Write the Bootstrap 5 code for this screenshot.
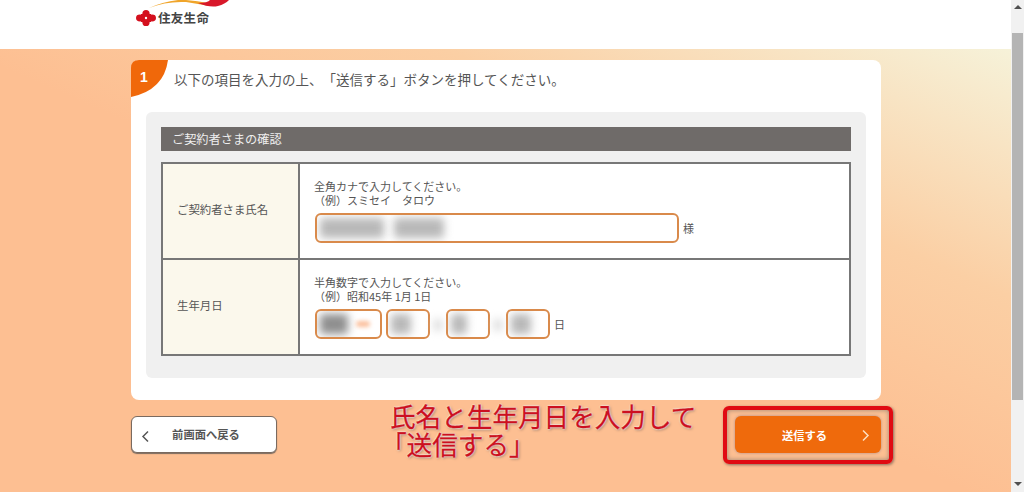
<!DOCTYPE html>
<html lang="ja">
<head>
<meta charset="utf-8">
<title>ご契約者さまの確認</title>
<link rel="stylesheet" href="https://cdn.jsdelivr.net/npm/bootstrap@5.3.0/dist/css/bootstrap.min.css">
<style>
html,body{height:492px;overflow:hidden}
body{font-family:"Noto Sans CJK JP","Liberation Sans",sans-serif;color:#555;font-size:11px;line-height:14px}
.shell{height:492px}
.viewport{width:1011px;height:492px;position:relative;overflow:hidden}
.sb{width:13px;height:492px;background:#f1f1f1;padding-top:33px;position:relative}
.sb-thumb{height:367px;background:#b4b4b4;margin:0 1px}
.sb-up,.sb-down{position:absolute;left:3px;width:0;height:0;border-left:4px solid transparent;border-right:4px solid transparent}
.sb-up{top:5px;border-bottom:4px solid #505050}
.sb-down{bottom:6px;border-top:4px solid #505050}
.top-head{height:49px;background:#fff;padding:10px 0 0 136px;position:relative}
.logo-text{font-size:12.5px;font-weight:700;color:#444;letter-spacing:.3px;line-height:14px}
.logo-mark{gap:2px}
.logo-arc{position:absolute;left:148px;top:0}
.stage{height:443px;background:linear-gradient(to top right,#fdbf92 0%,#fdbf92 48%,#fbcfa4 72%,#f6f2d9 100%);padding:11px 0 0 131px}
.sheet{width:750px;height:340px;background:#fff;border-radius:8px;position:relative;padding:52px 15px 0}
.step{position:absolute;left:0;top:0;width:37px;height:37px;background:#f0680a;clip-path:path("M0 8 Q0 0 8 0 L37 0 Q33 30 0 37 Z");color:#fff;font-weight:700;font-size:14px;font-family:"Liberation Sans",sans-serif;padding:10px 0 0 9px}
.lead-line{position:absolute;left:43px;top:10px;font-size:13.5px;line-height:18px;color:#555;white-space:nowrap}
.gray-box{height:266px;background:#f0f0f0;border-radius:6px;padding:15px}
.sec-bar{height:24px;background:#6f6b69;color:#eee;font-size:12.2px;line-height:24px;padding-left:11px;margin-bottom:11px}
.form-grid{border:2px solid #777;width:690px;height:194px}
.row-first{height:94px}
.row-second{height:96px;border-top:2px solid #777}
.cell-head{width:137px;background:#fbf8ec;border-right:2px solid #777;padding:0 0 4px 14px;font-size:11.4px;color:#555;flex:none}
.cell-main{background:#fff;padding:15px 0 0 14px;font-size:11px;color:#555}
.field-line{margin-left:1px}
.field{border:2px solid #d98a4b;border-radius:6px;background:#fff;height:30px;margin-top:6px;overflow:hidden;padding:3px 3px;flex:none}
.field-wide{width:364px;gap:10px}
.field-y{width:67px}
.field-s{width:44px}
.smudge{display:block;height:20px;background:#b9b9b9;filter:blur(4px);border-radius:3px;flex:none}
.smudge-dark{background:#8f8f8f}
.smudge-orange{background:#fbbf9c;height:6px;margin-top:7px;filter:blur(2px)}
.date-gap{width:16px;flex:none;padding:16px 4px 0}
.date-gap .smudge{height:12px;background:#d8d8d8;margin:0}
.unit{margin:5px 0 0 4px;color:#555}
.nav-line{width:750px;margin-top:16px}
.back-link,.send-link{width:146px;height:37px;border-radius:6px;font-size:11.3px;font-weight:700;position:relative;line-height:35px;text-align:center}
.back-link{background:#fff;border:1px solid #7a6a5f;box-shadow:0 1px 1px #7a6a5f;color:#555;padding:0 0 0 4px}
.send-link{background:#ef6a0c;border:0;color:#fff;line-height:36px;box-shadow:0 0 3px #a88;padding:0 7px 0 0}
.chev{position:absolute;top:13px;width:9px;height:13px}
.back-link .chev{left:9px}
.send-link .chev{right:11px}
.callout{position:absolute;left:390px;top:402px;font-size:25.6px;line-height:28px;color:#cc1020;white-space:nowrap;-webkit-text-stroke:.3px #cc1020;text-shadow:0 0 2px #fff,0 0 2px #fff,1px 1px 3px #8a6a5a}
.bracket-out{margin-left:-9px;display:inline-block}
.frame{position:absolute;left:723px;top:406px;width:170px;height:58px;border:4px solid #e00b12;border-radius:6px;box-shadow:1px 1px 3px #8a6a5a,inset 0 0 5px #9a8272}
</style>
</head>
<body>
<div class="shell d-flex">
  <div class="viewport">
    <header class="top-head">
      <svg class="logo-arc" width="84" height="8" viewBox="0 0 84 8"><path d="M1 8 Q18 1 38 2 Q50 4 62 6 L60 3 Q50 1 38 0 L30 0 Q14 2 1 8Z" fill="#f0a52a"/><path d="M50 3 Q62 8 70 6 Q77 4 81 0 L62 0 Q60 3 50 3Z" fill="#d8182a"/></svg>
      <div class="d-flex align-items-center logo-mark">
        <svg width="20" height="16" viewBox="0 0 20 16"><g fill="#d4101e"><ellipse cx="10" cy="3.6" rx="3.6" ry="3.6"/><ellipse cx="10" cy="12.4" rx="3.6" ry="3.6"/><ellipse cx="4" cy="8" rx="4" ry="3.4"/><ellipse cx="16" cy="8" rx="4" ry="3.4"/><rect x="5" y="4" width="10" height="8"/></g><circle cx="10" cy="8" r="1.2" fill="#fff"/></svg>
        <span class="logo-text">住友生命</span>
      </div>
    </header>
    <main class="stage">
      <section class="sheet">
        <div class="step">1</div>
        <p class="lead-line mb-0">以下の項目を入力の上、<span class="d-inline-block">「送信する」</span><span class="d-inline-block">ボタンを押してください。</span></p>
        <div class="gray-box">
          <div class="sec-bar">ご契約者さまの確認</div>
          <div class="form-grid">
            <div class="row-first d-flex">
              <div class="cell-head d-flex align-items-center">ご契約者さま氏名</div>
              <div class="cell-main flex-grow-1">
                全角カナで入力してください。<br>（例）スミセイ　タロウ
                <div class="field-line d-flex">
                  <div class="field field-wide d-flex"><span class="smudge" style="width:64px"></span><span class="smudge" style="width:50px"></span></div>
                  <span class="unit align-self-center">様</span>
                </div>
              </div>
            </div>
            <div class="row-second d-flex">
              <div class="cell-head d-flex align-items-center">生年月日</div>
              <div class="cell-main flex-grow-1">
                半角数字で入力してください。<br>（例）昭和45年 1月 1日
                <div class="field-line d-flex">
                  <div class="field field-y d-flex gap-2"><span class="smudge smudge-dark" style="width:28px"></span><span class="smudge smudge-orange" style="width:14px"></span></div>
                  <div class="field field-s ms-1"><span class="smudge" style="width:20px"></span></div>
                  <div class="date-gap"><span class="smudge"></span></div>
                  <div class="field field-s"><span class="smudge" style="width:16px"></span></div>
                  <div class="date-gap"><span class="smudge"></span></div>
                  <div class="field field-s"><span class="smudge" style="width:20px"></span></div>
                  <span class="unit align-self-center">日</span>
                </div>
              </div>
            </div>
          </div>
        </div>
      </section>
      <div class="nav-line d-flex justify-content-between">
        <button type="button" class="btn back-link">前画面へ戻る
          <svg class="chev" viewBox="0 0 9 13"><path d="M7 1.5 L2 6.5 L7 11.5" fill="none" stroke="#555" stroke-width="1.5"/></svg>
        </button>
        <button type="button" class="btn send-link">送信する
          <svg class="chev" viewBox="0 0 9 13"><path d="M2 1.5 L7 6.5 L2 11.5" fill="none" stroke="#fde0c0" stroke-width="1.5"/></svg>
        </button>
      </div>
    </main>
    <div class="callout">氏名と生年月日を入力して<br><span class="bracket-out">「送信する」</span></div>
    <div class="frame"></div>
  </div>
  <div class="sb"><span class="sb-up"></span><div class="sb-thumb"></div><span class="sb-down"></span></div>
</div>
<script src="https://cdn.jsdelivr.net/npm/bootstrap@5.3.0/dist/js/bootstrap.bundle.min.js"></script>
</body>
</html>
